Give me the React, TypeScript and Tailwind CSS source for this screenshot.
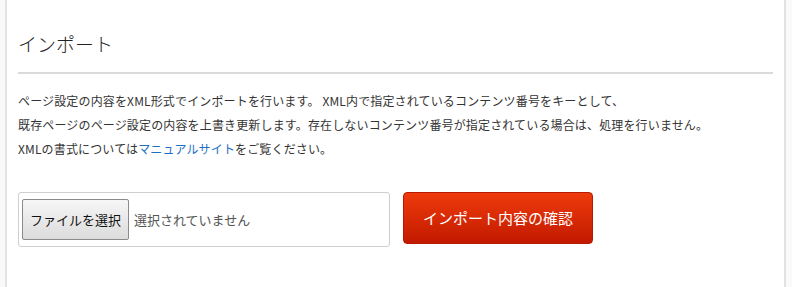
import React from "react";

const font = { fontFamily: '"Noto Sans CJK JP", "Noto Sans", sans-serif' };

export default function App() {
  return (
    <div className="w-full h-[287px] bg-[#f9f9f9] flex" style={font}>
      <div className="ml-[5px] w-[781px] h-full bg-white border-x-2 border-[#e2e2e2] px-[11px] text-[#333]">
        <h2 className="pt-[30px] pb-[14px] text-[19px] leading-[28px] font-light text-[#222] border-b-2 border-[#dadada]">
          インポート
        </h2>
        <div className="mt-[15px] text-[12px] leading-[24px] tracking-[0.15px]">
          <p>ページ設定の内容をXML形式でインポートを行います。 XML内で指定されているコンテンツ番号をキーとして、</p>
          <p>既存ページのページ設定の内容を上書き更新します。存在しないコンテンツ番号が指定されている場合は、処理を行いません。</p>
          <p>
            XMLの書式については<a className="text-[#1e6fc4]">マニュアルサイト</a>をご覧ください。
          </p>
        </div>
        <div className="mt-[31px] flex items-start gap-[13px]">
          <div className="w-[372px] h-[55px] border border-[#cfcfcf] rounded-[3px] flex items-center pl-[3px] gap-[5px]">
            <button className="h-[41px] w-[107px] text-[13px] text-[#111] border border-[#8a8a8a] rounded-[2px] bg-gradient-to-b from-[#f6f6f6] to-[#dcdcdc]">
              ファイルを選択
            </button>
            <span className="text-[13px] text-[#555]">選択されていません</span>
          </div>
          <button className="w-[190px] h-[52px] rounded-[4px] border border-[#b81a00] bg-gradient-to-b from-[#ee3a0c] to-[#c21800] text-white text-[15px]">
            インポート内容の確認
          </button>
        </div>
      </div>
    </div>
  );
}
